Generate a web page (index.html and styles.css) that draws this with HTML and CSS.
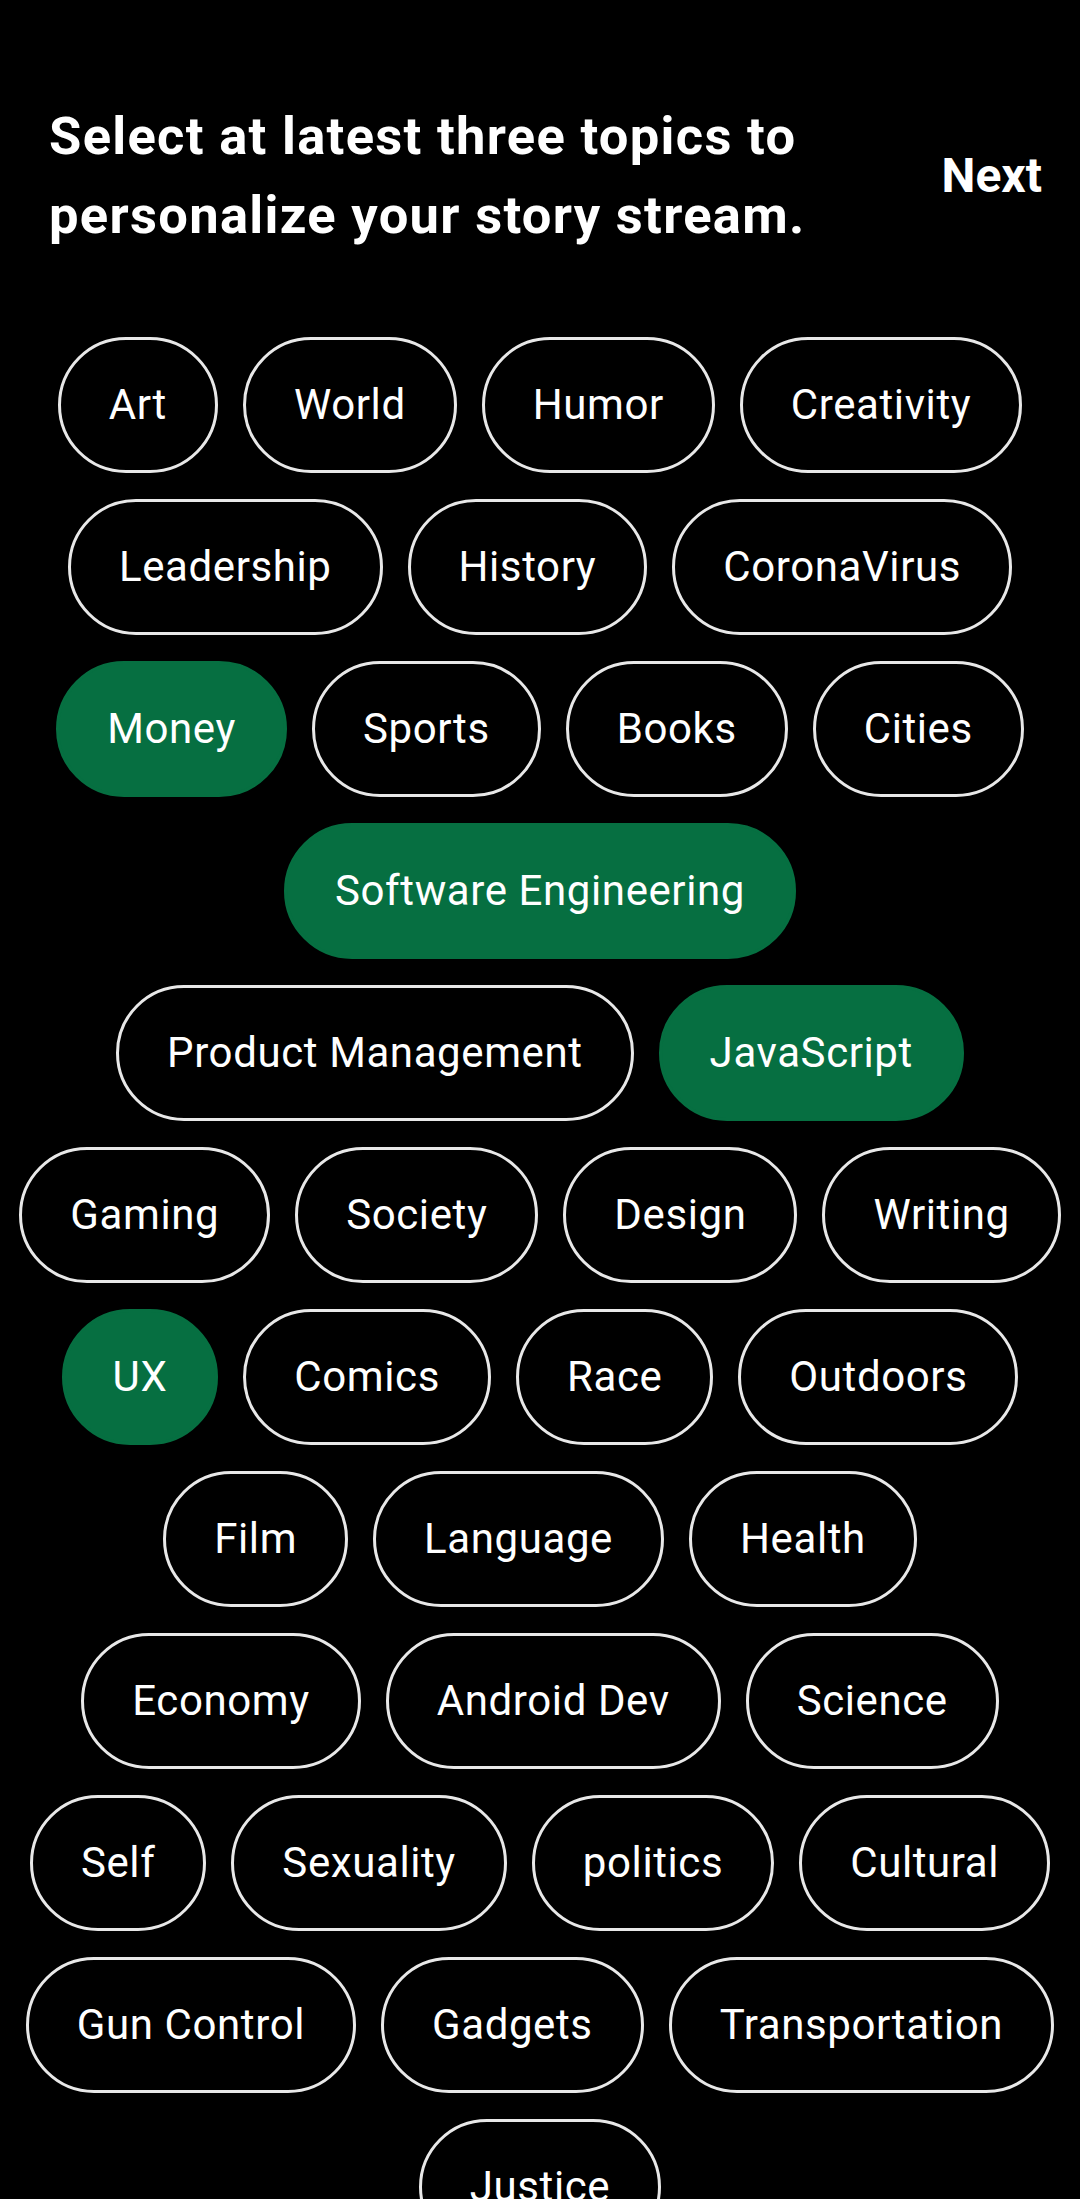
FILE: index.html
```html
<!DOCTYPE html>
<html lang="en">
<head>
<meta charset="utf-8">
<title>Select topics</title>
<link rel="stylesheet" href="styles.css">
</head>
<body>
<div class="screen">
  <header class="header">
    <h1 class="title">Select at latest three topics to personalize your story stream.</h1>
    <button class="next">Next</button>
  </header>
  <div class="chips">
    <div class="chip-row">
      <span class="chip">Art</span>
      <span class="chip">World</span>
      <span class="chip">Humor</span>
      <span class="chip">Creativity</span>
    </div>
    <div class="chip-row">
      <span class="chip">Leadership</span>
      <span class="chip">History</span>
      <span class="chip">CoronaVirus</span>
    </div>
    <div class="chip-row">
      <span class="chip selected">Money</span>
      <span class="chip">Sports</span>
      <span class="chip">Books</span>
      <span class="chip">Cities</span>
    </div>
    <div class="chip-row">
      <span class="chip selected">Software Engineering</span>
    </div>
    <div class="chip-row">
      <span class="chip">Product Management</span>
      <span class="chip selected">JavaScript</span>
    </div>
    <div class="chip-row">
      <span class="chip">Gaming</span>
      <span class="chip">Society</span>
      <span class="chip">Design</span>
      <span class="chip">Writing</span>
    </div>
    <div class="chip-row">
      <span class="chip selected">UX</span>
      <span class="chip">Comics</span>
      <span class="chip">Race</span>
      <span class="chip">Outdoors</span>
    </div>
    <div class="chip-row">
      <span class="chip">Film</span>
      <span class="chip">Language</span>
      <span class="chip">Health</span>
    </div>
    <div class="chip-row">
      <span class="chip">Economy</span>
      <span class="chip">Android Dev</span>
      <span class="chip">Science</span>
    </div>
    <div class="chip-row">
      <span class="chip">Self</span>
      <span class="chip">Sexuality</span>
      <span class="chip">politics</span>
      <span class="chip">Cultural</span>
    </div>
    <div class="chip-row">
      <span class="chip">Gun Control</span>
      <span class="chip">Gadgets</span>
      <span class="chip">Transportation</span>
    </div>
    <div class="chip-row">
      <span class="chip">Justice</span>
    </div>
  </div>
</div>
</body>
</html>
```
FILE: styles.css
```css
html, body {
  margin: 0;
  padding: 0;
  background: #000;
}
body {
  font-family: Roboto, "Noto Sans", "Liberation Sans", sans-serif;
  color: #fff;
}
.screen {
  width: 1080px;
  height: 2199px;
  overflow: hidden;
  background: #000;
}
.header {
  display: flex;
  align-items: center;
  justify-content: space-between;
  padding: 97px 38px 0 49px;
}
.title {
  margin: 0;
  width: 840px;
  font-size: 52.5px;
  line-height: 78.75px;
  font-weight: 700;
  letter-spacing: 1.3px;
  color: #fff;
}
.next {
  background: none;
  border: none;
  padding: 0;
  margin: 0;
  font-family: inherit;
  font-size: 48px;
  font-weight: 700;
  color: #fff;
  line-height: 1;
}
.chips {
  margin-top: 82px;
  display: flex;
  flex-direction: column;
  gap: 26px;
}
.chip-row {
  display: flex;
  justify-content: center;
  gap: 25px;
}
.chip {
  box-sizing: border-box;
  height: 136px;
  padding: 0 48px;
  border: 3px solid #e8e8e8;
  border-radius: 68px;
  display: inline-flex;
  align-items: center;
  justify-content: center;
  font-size: 42px;
  letter-spacing: 0.6px;
  color: #fff;
  white-space: nowrap;
  flex: none;
}
.chip.selected {
  background: #066f41;
  border-color: #066f41;
}
```
